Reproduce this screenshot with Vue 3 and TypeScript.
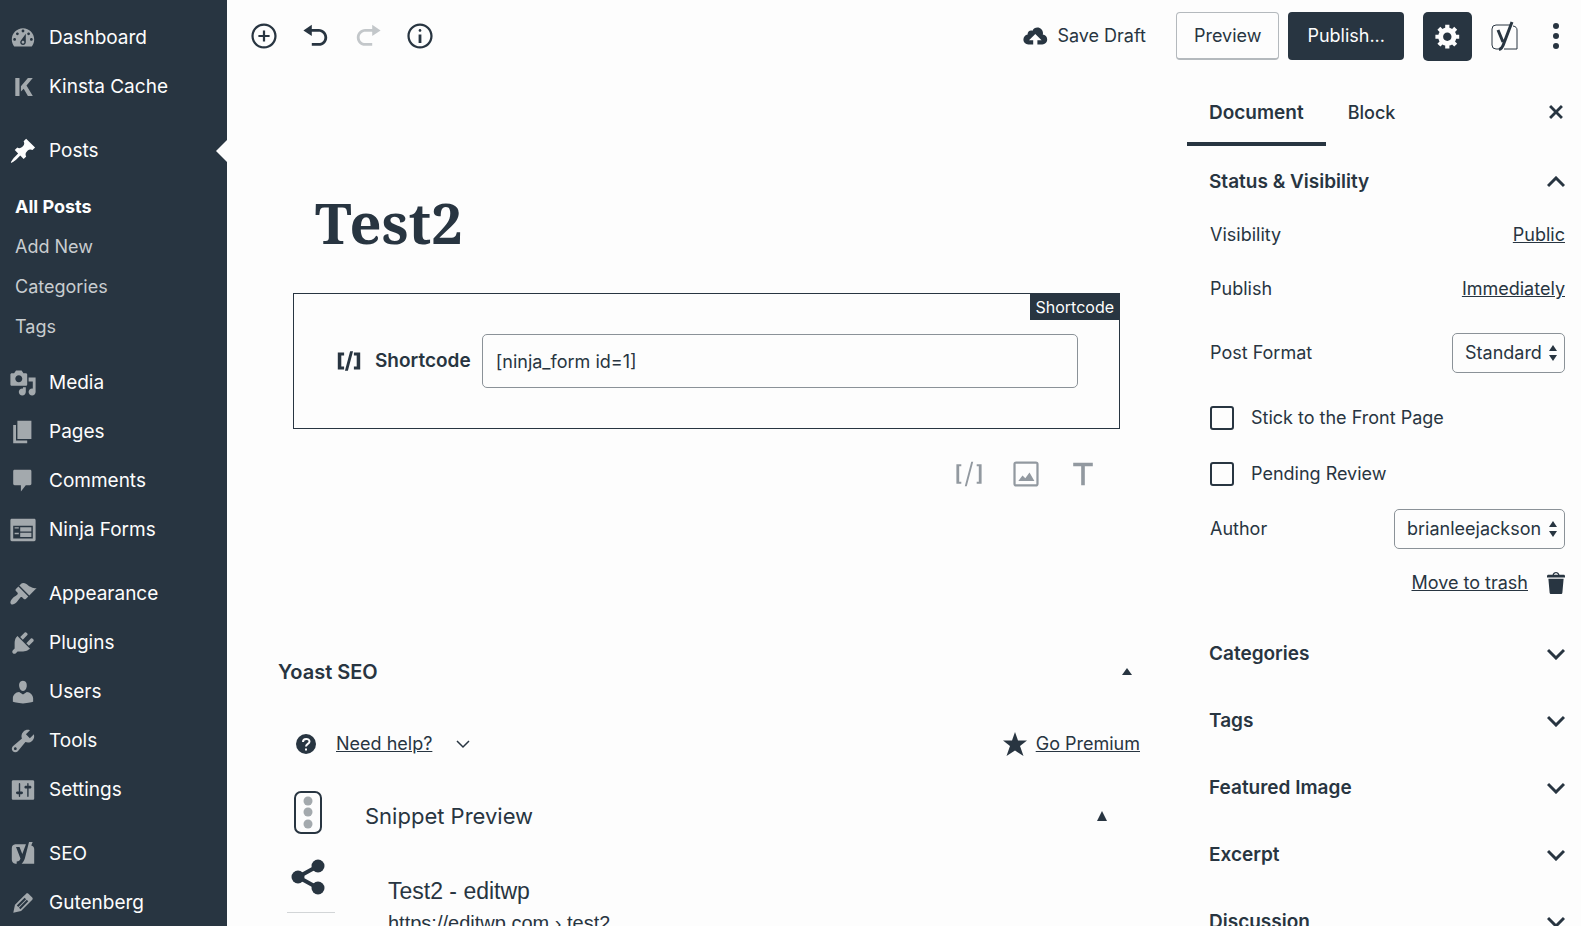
<script setup lang="ts">
import { ref } from 'vue'

interface MenuItem {
  label: string
  icon: string
  current?: boolean
  children?: string[]
}

const icons: Record<string, string> = {
  dashboard:
    'M3.76 16h12.48c1.1-1.37 1.76-3.11 1.76-5 0-4.42-3.58-8-8-8s-8 3.58-8 8c0 1.89.66 3.63 1.76 5zM10 4c.55 0 1 .45 1 1s-.45 1-1 1-1-.45-1-1 .45-1 1-1zM6 6c.55 0 1 .45 1 1s-.45 1-1 1-1-.45-1-1 .45-1 1-1zm8 0c.55 0 1 .45 1 1s-.45 1-1 1-1-.45-1-1 .45-1 1-1zm-5.37 5.55L12 7v6c0 1.1-.9 2-2 2s-2-.9-2-2c0-.57.24-1.08.63-1.45zM4 10c.55 0 1 .45 1 1s-.45 1-1 1-1-.45-1-1 .45-1 1-1zm12 0c.55 0 1 .45 1 1s-.45 1-1 1-1-.45-1-1 .45-1 1-1zm-5 3c0-.55-.45-1-1-1s-1 .45-1 1 .45 1 1 1 1-.45 1-1z',
  kinsta: 'M4.500 3.500h3v13h-3zM8.500 9.500l5-6h3.500l-4.500 5.500 4.500 7.500h-3.500l-3-5.200-2 2z',
  pin: 'M10.440 3.020l1.820-1.820 6.360 6.350-1.830 1.820c-1.050-.68-2.480-.57-3.410.36l-.75.75c-.92.93-1.040 2.350-.35 3.410l-1.830 1.820-2.410-2.410-2.800 2.790c-.42.42-3.380 2.710-3.800 2.290s1.860-3.390 2.280-3.810l2.790-2.790L4.100 9.360l1.830-1.820c1.050.69 2.480.57 3.400-.36l.75-.75c.93-.92 1.050-2.350.36-3.410z',
  media:
    'M13 11V4c0-.55-.45-1-1-1h-1.670L9 1H5L3.670 3H2c-.55 0-1 .45-1 1v7c0 .55.45 1 1 1h10c.55 0 1-.45 1-1zM7 4.500c1.380 0 2.500 1.120 2.500 2.500S8.380 9.500 7 9.500 4.500 8.380 4.500 7 5.620 4.500 7 4.500zM14 6h5v10.500c0 1.380-1.120 2.500-2.500 2.500S14 17.880 14 16.500s1.120-2.500 2.500-2.500c.17 0 .34.02.5.05V9h-3V6zm-4 8.050V13h2v3.500c0 1.380-1.120 2.500-2.500 2.500S7 17.880 7 16.500 8.120 14 9.500 14c.17 0 .34.02.5.05z',
  pages: 'M6 15V2h10v13H6zm-1 1h8v2H3V5h2v11z',
  comments: 'M4 2h11c.6 0 1 .4 1 1v9c0 .6-.4 1-1 1h-3l-3.500 4.500V13H4c-.6 0-1-.4-1-1V3c0-.6.400-1 1-1z',
  forms:
    'M2 2h16c.55 0 1 .45 1 1v14c0 .55-.45 1-1 1H2c-.55 0-1-.45-1-1V3c0-.55.45-1 1-1zm15 14V7H3v9h14zM4 8v1h3V8H4zm4 0v3h8V8H8zm-4 4v1h3v-1H4zm4 0v3h8v-3H8z',
  appearance:
    'M14.480 11.060L7.410 3.990l1.500-1.500c.5-.56 2.300-.47 3.510.32 1.210.8 1.430 1.280 2.910 2.100 1.180.64 2.450 1.260 4.450.85zm-.71.71L6.700 4.700 4.930 6.470c-.39.39-.39 1.020 0 1.410l1.060 1.060c.39.39.39 1.030 0 1.420-.6.6-1.430 1.110-2.210 1.690-.35.26-.7.53-1.010.84C1.430 14.230.4 16.080 1.400 17.070c.99 1 2.840-.03 4.180-1.360.31-.31.58-.66.85-1.020.57-.78 1.080-1.610 1.690-2.210.39-.39 1.020-.39 1.410 0l1.060 1.060c.39.39 1.020.39 1.410 0z',
  plugins:
    'M13.110 4.360L9.870 7.600 8 5.730l3.240-3.240c.35-.34 1.050-.2 1.560.32.52.51.66 1.210.31 1.550zm-8 1.770l.91-1.120 9.010 9.010-1.190.84c-.71.71-2.630 1.160-3.820 1.160H6.140L4.900 17.260c-.59.59-1.540.59-2.120 0-.59-.58-.59-1.530 0-2.120l1.240-1.240v-3.880c0-1.130.4-3.190 1.090-3.890zm7.260 3.970l3.240-3.240c.34-.35 1.040-.21 1.550.31.52.51.66 1.210.31 1.550l-3.240 3.250z',
  users:
    'M10 9.250c-2.270 0-2.730-3.440-2.730-3.440C7 4.020 7.820 2 9.970 2c2.160 0 2.980 2.020 2.710 3.810 0 0-.41 3.440-2.680 3.440zm0 2.570L12.720 10c2.390 0 4.520 2.330 4.520 4.530v2.490s-3.650 1.130-7.240 1.130c-3.650 0-7.240-1.130-7.240-1.130v-2.490c0-2.250 1.940-4.480 4.470-4.480z',
  tools:
    'M16.680 9.770c-1.340 1.340-3.300 1.670-4.950.99l-5.410 6.520c-.99.99-2.590.99-3.580 0s-.99-2.590 0-3.570l6.520-5.420c-.68-1.650-.35-3.610.99-4.950 1.280-1.280 3.120-1.620 4.720-1.060l-2.890 2.890 2.820 2.820 2.860-2.870c.53 1.580.18 3.390-1.080 4.650zM3.810 16.210c.4.39 1.040.39 1.430 0 .4-.4.4-1.040 0-1.430-.39-.4-1.030-.4-1.430 0-.39.39-.39 1.030 0 1.430z',
  settings:
    'M18 16V4c0-.55-.45-1-1-1H3c-.55 0-1 .45-1 1v12c0 .55.45 1 1 1h14c.55 0 1-.45 1-1zM8 11h1c.55 0 1 .45 1 1s-.45 1-1 1H8v1.500c0 .28-.22.5-.5.5s-.5-.22-.5-.5V13H6c-.55 0-1-.45-1-1s.45-1 1-1h1V5.500c0-.28.22-.5.5-.5s.5.22.5.5V11zm5-2h-1c-.55 0-1-.45-1-1s.45-1 1-1h1V5.500c0-.28.22-.5.5-.5s.5.22.5.5V7h1c.55 0 1 .45 1 1s-.45 1-1 1h-1v5.500c0 .28-.22.5-.5.5s-.5-.22-.5-.5V9z',
  seo: 'M4.500 3h7.600l-2.600 7-2-5H5l3.200 8.200c-.4 1.500-1.200 2-2.700 2.200V17h-1A3 3 0 0 1 2 14V6a3 3 0 0 1 2.500-3zM14.300 1.500h2.600l-1 2.500c1.300.3 2.100 1.200 2.100 2.500V17H9c1.300-1 1.700-2.200 2.300-3.700z',
  edit: 'M13.890 3.390l2.710 2.720c.46.46.42 1.240.03 1.640l-8.010 8.020-5.560 1.160 1.160-5.580s7.600-7.630 7.990-8.030c.39-.39 1.220-.39 1.680.07zm-2.730 2.790l-5.590 5.610 1.110 1.110 5.540-5.650zm-2.970 8.230l5.580-5.600-1.070-1.080-5.590 5.600z',
  insert:
    'M10 1c-5 0-9 4-9 9s4 9 9 9 9-4 9-9-4-9-9-9zm0 16.400c-4.100 0-7.400-3.300-7.400-7.400S5.900 2.600 10 2.600s7.400 3.300 7.400 7.400-3.300 7.400-7.400 7.400zm.8-11.400H9.200v3.200H6v1.600h3.200V14h1.600v-3.200H14V9.200h-3.200z',
  undo: 'M12 5H7V2L1 6l6 4V7h5c2.200 0 4 1.800 4 4s-1.800 4-4 4H7v2h5c3.300 0 6-2.700 6-6s-2.700-6-6-6z',
  redo: 'M8 5h5V2l6 4-6 4V7H8c-2.200 0-4 1.800-4 4s1.800 4 4 4h5v2H8c-3.300 0-6-2.700-6-6s2.700-6 6-6z',
  info: 'M9 15h2V9H9v6zm1-10c-.5 0-1 .5-1 1s.5 1 1 1 1-.5 1-1-.5-1-1-1zm0-4c-5 0-9 4-9 9s4 9 9 9 9-4 9-9-4-9-9-9zm0 16.400c-4.100 0-7.400-3.300-7.400-7.400S5.900 2.600 10 2.600s7.400 3.300 7.400 7.400-3.300 7.400-7.400 7.400z',
  cloud:
    'M14.800 9c.1-.3.2-.6.2-1 0-2.200-1.800-4-4-4-1.500 0-2.900.9-3.500 2.200-.3-.1-.7-.2-1-.2C5.100 6 4 7.100 4 8.500c0 .2 0 .4.1.5-1.800.3-3.100 1.700-3.100 3.500C1 14.400 2.600 16 4.500 16H8v-3H5l4.500-4.500L14 13h-3v3h3.500c1.900 0 3.500-1.600 3.500-3.500 0-1.800-1.400-3.300-3.200-3.500z',
  gear: 'M18 12h-2.180c-.17.7-.44 1.350-.81 1.930l1.540 1.540-2.100 2.100-1.540-1.540c-.58.36-1.230.63-1.910.79V19H8v-2.180c-.68-.16-1.330-.43-1.910-.79l-1.540 1.540-2.120-2.120 1.540-1.540c-.36-.58-.63-1.230-.79-1.910H1V9.030h2.170c.16-.7.44-1.350.8-1.940L2.430 5.550l2.100-2.100 1.540 1.540c.58-.37 1.240-.64 1.930-.81V2h3v2.180c.68.16 1.330.43 1.910.79l1.540-1.540 2.120 2.120-1.540 1.540c.36.59.64 1.240.8 1.940H18V12zm-8.500 1.500c1.660 0 3-1.340 3-3s-1.340-3-3-3-3 1.340-3 3 1.340 3 3 3z',
  shortcode: 'M6.500 14h-2V6h2V4H2v12h4.500zM7.100 17h2.100l3.700-14h-2.100zM13.500 4v2h2v8h-2v2H18V4z',
  shortcodeThin: 'M4.500 15.500H3v-11h1.500V3H1v14h3.500zM7 18.800h1.400l4.600-17.600h-1.400zM15.500 3v1.500H17v11h-1.500V17H19V3z',
  image:
    'M3 1h14a2 2 0 0 1 2 2v14a2 2 0 0 1-2 2H3a2 2 0 0 1-2-2V3a2 2 0 0 1 2-2zm-.4 1.600v14.800h14.800V2.600zM4.500 15l3-4 2 2 3-4 3.500 6z',
  text: 'M3 2h14v2.500h-5.700V18H8.700V4.500H3z',
  close: 'M14.950 6.460L11.410 10l3.540 3.540-1.410 1.410L10 11.420l-3.530 3.530-1.420-1.420L8.580 10 5.050 6.470l1.420-1.420L10 8.580l3.540-3.530z',
  trash:
    'M12 4h3c.6 0 1 .4 1 1v1H3V5c0-.6.5-1 1-1h3c.2-1.100 1.300-2 2.500-2s2.300.9 2.500 2zM8 4h3c-.2-.6-.9-1-1.500-1S8.200 3.400 8 4zM4 7h11l-.9 10.100c0 .5-.5.9-1 .9H5.900c-.5 0-.9-.4-1-.9L4 7z',
}

const menu: MenuItem[][] = [
  [
    { label: 'Dashboard', icon: 'dashboard' },
    { label: 'Kinsta Cache', icon: 'kinsta' },
  ],
  [
    { label: 'Posts', icon: 'pin', current: true, children: ['All Posts', 'Add New', 'Categories', 'Tags'] },
    { label: 'Media', icon: 'media' },
    { label: 'Pages', icon: 'pages' },
    { label: 'Comments', icon: 'comments' },
    { label: 'Ninja Forms', icon: 'forms' },
  ],
  [
    { label: 'Appearance', icon: 'appearance' },
    { label: 'Plugins', icon: 'plugins' },
    { label: 'Users', icon: 'users' },
    { label: 'Tools', icon: 'tools' },
    { label: 'Settings', icon: 'settings' },
  ],
  [
    { label: 'SEO', icon: 'seo' },
    { label: 'Gutenberg', icon: 'edit' },
  ],
]

const tools = [
  { label: 'Add block', icon: 'insert' },
  { label: 'Undo', icon: 'undo' },
  { label: 'Redo', icon: 'redo', disabled: true },
  { label: 'Content structure', icon: 'info' },
]

const suggestions = [
  { label: 'Add Shortcode', icon: 'shortcodeThin' },
  { label: 'Add Image', icon: 'image' },
  { label: 'Add Paragraph', icon: 'text' },
]

const panels = ['Categories', 'Tags', 'Featured Image', 'Excerpt', 'Discussion']

const shortcode = ref('[ninja_form id=1]')
const format = ref('Standard')
const author = ref('brianleejackson')
const sticky = ref(false)
const pending = ref(false)
</script>

<template>
  <div class="shell">
    <nav class="menu" aria-label="Main menu">
      <ul v-for="(group, g) in menu" :key="g" class="group">
        <li v-for="item in group" :key="item.label">
          <a href="#" class="item" :class="{ current: item.current }">
            <svg viewBox="0 0 20 20" class="glyph"><path fill-rule="evenodd" :d="icons[item.icon]" /></svg>
            <span>{{ item.label }}</span>
          </a>
          <ul v-if="item.children" class="submenu">
            <li v-for="(child, c) in item.children" :key="child">
              <a href="#" :class="{ active: c === 0 }">{{ child }}</a>
            </li>
          </ul>
        </li>
      </ul>
    </nav>

    <div class="workspace">
      <header class="topbar">
        <div class="tools">
          <button v-for="t in tools" :key="t.label" type="button" class="tool" :aria-label="t.label" :disabled="t.disabled">
            <svg viewBox="0 0 20 20" class="glyph"><path fill-rule="evenodd" :d="icons[t.icon]" /></svg>
          </button>
        </div>
        <div class="actions">
          <button type="button" class="save">
            <svg viewBox="0 0 20 20" class="glyph"><path :d="icons.cloud" /></svg>
            <span>Save Draft</span>
          </button>
          <button type="button" class="preview">Preview</button>
          <button type="button" class="publish">Publish...</button>
          <button type="button" class="gear" aria-label="Settings">
            <svg viewBox="0 0 20 20" class="glyph"><path fill-rule="evenodd" :d="icons.gear" /></svg>
          </button>
          <button type="button" class="plain yoast" aria-label="Yoast SEO">
            <svg viewBox="0 0 28 30" class="yoast-icon">
              <path d="M19 4H5a4 4 0 0 0-4 4v16a4 4 0 0 0 4 4h3M22 5c3 .500 4 2 4 4v19H13" class="line" />
              <path d="M7 9l5 12M21 1l-8 21c-1.300 4-2.500 6-5 6.500" class="stroke" />
            </svg>
          </button>
          <button type="button" class="plain" aria-label="More">
            <svg viewBox="0 0 8 28" class="dots">
              <circle cx="4" cy="4" r="3" /><circle cx="4" cy="14" r="3" /><circle cx="4" cy="24" r="3" />
            </svg>
          </button>
        </div>
      </header>

      <div class="columns">
        <main class="editor">
          <h1>Test2</h1>
          <section class="block">
            <span class="tag">Shortcode</span>
            <label for="shortcode">
              <svg viewBox="0 0 20 20" class="glyph"><path :d="icons.shortcode" /></svg>
              <span>Shortcode</span>
            </label>
            <input id="shortcode" v-model="shortcode" type="text" />
          </section>
          <div class="suggestions">
            <button v-for="s in suggestions" :key="s.label" type="button" class="plain" :aria-label="s.label">
              <svg viewBox="0 0 20 20" class="glyph"><path fill-rule="evenodd" :d="icons[s.icon]" /></svg>
            </button>
          </div>

          <section class="metabox">
            <div class="meta-head">
              <h2>Yoast SEO</h2>
              <button type="button" class="plain" aria-label="Toggle Yoast SEO">
                <svg viewBox="0 0 10 8" class="small-tri"><path d="M5 0l5 7H0z" /></svg>
              </button>
            </div>
            <div class="help-row">
              <svg viewBox="0 0 20 20" class="help-icon">
                <circle cx="10" cy="10" r="10" />
                <path d="M7 8c0-4 6.500-4 6.500-.5C13.500 10 10 9.800 10 12.500M10 14.500v2" />
              </svg>
              <a href="#">Need help?</a>
              <svg viewBox="0 0 14 9" class="thin-chevron"><path d="M1 1l6 6 6-6" /></svg>
              <span class="premium">
                <svg viewBox="0 0 24 24" class="star"><path d="M12 0l3 8.500h9l-7 5.500 3.500 10L12 18.500 3.500 24 7 14 0 8.500h9z" /></svg>
                <a href="#">Go Premium</a>
              </span>
            </div>
            <div class="snippet">
              <div class="rail">
                <svg viewBox="0 0 28 43" class="traffic">
                  <rect x="1" y="1" width="26" height="41" rx="6" />
                  <circle cx="14" cy="10" r="4.500" /><circle cx="14" cy="21" r="4.500" /><circle cx="14" cy="33" r="4.500" />
                </svg>
                <svg viewBox="0 0 34 36" class="share">
                  <path d="M27 7L7 18l20 11" />
                  <circle cx="27" cy="7" r="6.500" /><circle cx="7" cy="18" r="6.500" /><circle cx="27" cy="29" r="6.500" />
                </svg>
                <hr />
              </div>
              <div class="snippet-main">
                <div class="snippet-head">
                  <h3>Snippet Preview</h3>
                  <button type="button" class="plain" aria-label="Toggle snippet preview">
                    <svg viewBox="0 0 10 10" class="tri"><path d="M5 0l5 10H0z" /></svg>
                  </button>
                </div>
                <div class="result">
                  <p class="result-title">Test2 - editwp</p>
                  <p class="result-url">https://editwp.com › test2</p>
                </div>
              </div>
            </div>
          </section>
        </main>

        <aside class="sidebar" aria-label="Document settings">
          <div class="tabs">
            <button type="button" class="tab selected">Document</button>
            <button type="button" class="tab">Block</button>
            <button type="button" class="plain close" aria-label="Close settings">
              <svg viewBox="0 0 20 20" class="glyph"><path :d="icons.close" /></svg>
            </button>
          </div>

          <button type="button" class="panel-head status">
            <span>Status &amp; Visibility</span>
            <svg viewBox="0 0 18 12" class="chevron"><path d="M1 10l8-8 8 8" /></svg>
          </button>
          <div class="fields">
            <div class="row"><span>Visibility</span><a href="#">Public</a></div>
            <div class="row"><span>Publish</span><a href="#">Immediately</a></div>
            <div class="row tall">
              <label for="format">Post Format</label>
              <span class="select">
                <select id="format" v-model="format"><option>Standard</option></select>
                <svg viewBox="0 0 8 16"><path d="M4 0l4 6H0zM4 16l4-6H0z" /></svg>
              </span>
            </div>
            <label class="row check"><input v-model="sticky" type="checkbox" /><span>Stick to the Front Page</span></label>
            <label class="row check"><input v-model="pending" type="checkbox" /><span>Pending Review</span></label>
            <div class="row">
              <label for="author">Author</label>
              <span class="select">
                <select id="author" v-model="author"><option>brianleejackson</option></select>
                <svg viewBox="0 0 8 16"><path d="M4 0l4 6H0zM4 16l4-6H0z" /></svg>
              </span>
            </div>
            <div class="row trash">
              <a href="#">Move to trash</a>
              <svg viewBox="3 2 13 16" class="trash-icon"><path fill-rule="evenodd" :d="icons.trash" /></svg>
            </div>
          </div>

          <button v-for="p in panels" :key="p" type="button" class="panel-head">
            <span>{{ p }}</span>
            <svg viewBox="0 0 18 12" class="chevron"><path d="M1 2l8 8 8-8" /></svg>
          </button>
        </aside>
      </div>
    </div>
  </div>
</template>

<style>
body {
  background: #fdfdfd;
}
</style>

<style scoped>
.shell {
  --ink: #283541;
  --paper: #fdfdfd;
  --mid: #8b9298;
  display: flex;
  height: 100vh;
  overflow: hidden;
  background: var(--paper);
  color: var(--ink);
  font-family: Inter, "Liberation Sans", sans-serif;
  font-size: 18px;
  line-height: 24px;
}
* {
  box-sizing: border-box;
}
ul,
h1,
h2,
h3,
p {
  margin: 0;
  padding: 0;
  list-style: none;
}
button,
input,
select {
  font: inherit;
  color: inherit;
  margin: 0;
}
button {
  border: 0;
  padding: 0;
  background: none;
}
a {
  color: inherit;
}
svg {
  display: block;
  fill: currentColor;
  flex: none;
}
.glyph {
  width: 28px;
  height: 28px;
}
.plain {
  display: flex;
}

/* Admin menu */
.menu {
  flex: 0 0 227px;
  display: flex;
  flex-direction: column;
  gap: 15px;
  padding-top: 13px;
  background: var(--ink);
  color: var(--paper);
  font-size: 19px;
}
.item {
  display: flex;
  align-items: center;
  gap: 12px;
  height: 49px;
  padding-left: 9px;
  text-decoration: none;
}
.item .glyph {
  color: #a3a9ad;
}
.item.current {
  position: relative;
}
.item.current .glyph {
  color: var(--paper);
}
.item.current::after {
  content: "";
  position: absolute;
  right: 0;
  border: 11px solid transparent;
  border-left: 0;
  border-right-color: var(--paper);
}
.submenu {
  padding: 12px 0 11px 15px;
  font-size: 18px;
}
.submenu a {
  display: block;
  line-height: 40px;
  color: #c9cdd0;
  text-decoration: none;
}
.submenu .active {
  color: var(--paper);
  font-weight: 700;
}

/* Top bar */
.workspace {
  flex: 1;
  min-width: 0;
  display: flex;
  flex-direction: column;
}
.topbar {
  display: flex;
  justify-content: space-between;
  align-items: center;
  height: 72px;
  padding: 0 21px 0 23px;
}
.tools,
.actions {
  display: flex;
  align-items: center;
}
.tools {
  gap: 24px;
}
.tool:disabled {
  color: #c3c7ca;
}
.save {
  display: flex;
  align-items: center;
  gap: 7px;
  margin-right: 30px;
}
.preview,
.publish {
  height: 48px;
  border-radius: 4px;
}
.preview {
  padding: 0 17px;
  border: 1px solid #b4b9bd;
  border-bottom-width: 2px;
}
.publish {
  margin: 0 19px 0 9px;
  padding: 0 19px;
  background: var(--ink);
  color: var(--paper);
}
.gear {
  display: grid;
  place-items: center;
  width: 49px;
  height: 49px;
  border-radius: 5px;
  background: var(--ink);
  color: var(--paper);
}
.yoast {
  margin: 0 33px 0 19px;
}
.yoast-icon {
  width: 28px;
  height: 30px;
  fill: none;
  stroke: currentColor;
}
.line {
  stroke-width: 1;
}
.stroke {
  stroke-width: 3;
}
.dots {
  width: 8px;
  height: 28px;
}

.columns {
  flex: 1;
  min-height: 0;
  display: flex;
}

/* Editor */
.editor {
  flex: 1;
  min-width: 0;
  padding-top: 118px;
}
h1 {
  margin: 0 88px;
  font-family: "Noto Serif", "DejaVu Serif Condensed", "DejaVu Serif", serif;
  font-size: 56px;
  line-height: 64px;
  font-weight: 700;
}
.block {
  position: relative;
  display: flex;
  align-items: center;
  gap: 11px;
  height: 136px;
  margin: 39px 67px 0 66px;
  padding: 0 41px;
  border: 1px solid var(--ink);
}
.tag {
  position: absolute;
  top: 0;
  right: 0;
  padding: 0 5px;
  background: var(--ink);
  color: var(--paper);
  font-size: 16px;
  line-height: 26px;
}
.block label {
  display: flex;
  align-items: center;
  gap: 12px;
  font-size: 19px;
  font-weight: 600;
}
.block input {
  flex: 1;
  min-width: 0;
  height: 54px;
  padding: 0 13px;
  border: 1px solid var(--mid);
  border-radius: 5px;
  background: transparent;
}
.suggestions {
  display: flex;
  justify-content: flex-end;
  gap: 29px;
  margin: 31px 90px 0 0;
  color: #9299a0;
}

/* Metabox */
.metabox {
  margin: 172px 47px 0 51px;
}
.meta-head {
  display: flex;
  justify-content: space-between;
  align-items: center;
  padding-right: 8px;
}
h2 {
  font-size: 20px;
  line-height: 24px;
  font-weight: 600;
}
.small-tri {
  width: 10px;
  height: 8px;
}
.help-row {
  display: flex;
  align-items: center;
  margin-top: 48px;
  padding-left: 18px;
}
.help-icon {
  width: 20px;
  height: 20px;
  margin-right: 20px;
}
.help-icon path {
  fill: none;
  stroke: var(--paper);
  stroke-width: 2;
}
.thin-chevron {
  width: 14px;
  height: 9px;
  margin-left: 24px;
  fill: none;
  stroke: currentColor;
  stroke-width: 1.500;
}
.premium {
  display: flex;
  align-items: center;
  gap: 9px;
  margin-left: auto;
}
.star {
  width: 24px;
  height: 24px;
}
.snippet {
  display: flex;
  margin-top: 35px;
}
.rail {
  width: 48px;
  margin-left: 9px;
}
.traffic {
  width: 28px;
  height: 43px;
  margin-left: 7px;
}
.traffic rect {
  fill: none;
  stroke: currentColor;
  stroke-width: 2;
}
.traffic circle {
  fill: #a3a9ad;
}
.share {
  width: 34px;
  height: 36px;
  margin: 25px 0 0 4px;
}
.share path {
  fill: none;
  stroke: currentColor;
  stroke-width: 4;
}
.rail hr {
  margin: 17px 0 0;
  border: 0;
  border-top: 1px solid #d2d5d7;
}
.snippet-main {
  flex: 1;
  padding: 9px 33px 0 30px;
}
.snippet-head {
  display: flex;
  justify-content: space-between;
  align-items: center;
}
h3 {
  font-size: 22px;
  line-height: 32px;
  font-weight: 400;
}
.tri {
  width: 10px;
  height: 10px;
}
.result {
  padding: 43px 0 0 23px;
  font-family: "Liberation Sans", Arial, sans-serif;
}
.result-title {
  font-size: 23px;
  line-height: 32px;
}
.result-url {
  font-size: 20px;
  line-height: 32px;
  white-space: nowrap;
}

/* Settings sidebar */
.sidebar {
  flex: 0 0 394px;
}
.tabs {
  display: flex;
  align-items: stretch;
  height: 74px;
  padding-right: 11px;
}
.tab {
  padding: 12px 22px 0;
  font-weight: 500;
  border-bottom: 4px solid transparent;
}
.tab.selected {
  font-size: 19px;
  font-weight: 600;
  border-bottom-color: var(--ink);
}
.close {
  align-items: center;
  margin-left: auto;
  padding-top: 6px;
}
.panel-head {
  display: flex;
  justify-content: space-between;
  align-items: center;
  width: 100%;
  height: 67px;
  padding: 0 16px 0 22px;
  font-size: 19px;
  font-weight: 600;
}
.panel-head.status {
  height: 62px;
  padding-top: 10px;
}
.chevron {
  width: 18px;
  height: 12px;
  fill: none;
  stroke: currentColor;
  stroke-width: 3;
}
.fields {
  padding: 0 16px 10px 23px;
}
.row {
  display: flex;
  justify-content: space-between;
  align-items: center;
  height: 54px;
}
.row.tall {
  height: 74px;
}
.row.check {
  justify-content: flex-start;
  gap: 17px;
  height: 56px;
}
.check input {
  appearance: none;
  width: 24px;
  height: 24px;
  border: 2px solid var(--ink);
  border-radius: 3px;
}
.row.trash {
  justify-content: flex-end;
  gap: 19px;
}
.trash-icon {
  width: 18px;
  height: 24px;
}
.select {
  display: grid;
  align-items: center;
}
.select > * {
  grid-area: 1 / 1;
}
.select select {
  appearance: none;
  height: 40px;
  padding: 0 22px 0 12px;
  border: 1px solid var(--mid);
  border-radius: 5px;
  background: transparent;
}
.select svg {
  justify-self: end;
  width: 8px;
  height: 16px;
  margin-right: 8px;
  pointer-events: none;
}
</style>
